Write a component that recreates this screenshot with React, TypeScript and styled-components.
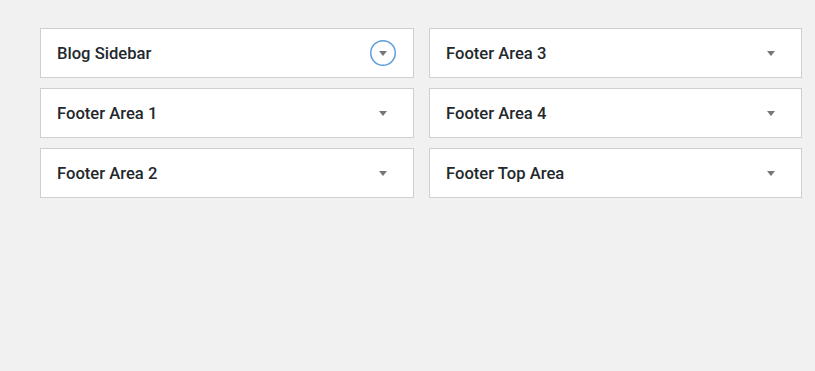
import styled, { createGlobalStyle } from 'styled-components'

const GlobalStyle = createGlobalStyle`
	html, body {
		margin: 0;
		padding: 0;
		background: #f1f1f1;
		font-family: Roboto, "Liberation Sans", sans-serif;
	}
`

const Page = styled.div`
	width: 815px;
	height: 371px;
	padding: 28px 0 0 40px;
	box-sizing: border-box;
`

const Grid = styled.div`
	display: grid;
	grid-template-columns: 374px 373px;
	column-gap: 15px;
	row-gap: 10px;
`

const Card = styled.div`
	height: 50px;
	box-sizing: border-box;
	background: #fff;
	border: 1px solid #ccd0d4;
	display: flex;
	align-items: center;
	justify-content: space-between;
	padding: 0 17px 0 16px;
`

const Title = styled.h2`
	margin: 0;
	font-size: 16.6px;
	font-weight: 500;
	color: #23282d;
	letter-spacing: 0;
`

const Toggle = styled.button<{ $focused?: boolean }>`
	width: 26px;
	height: 26px;
	padding: 0;
	margin: 0;
	border-radius: 50%;
	background: transparent;
	border: 0;
	box-shadow: ${p => (p.$focused ? 'inset 0 0 0 1.5px #5b9dd9' : 'none')};
	display: flex;
	align-items: center;
	justify-content: center;
	cursor: pointer;

	&::after {
		content: '';
		width: 0;
		height: 0;
		margin-top: 1px;
		border-left: 4px solid transparent;
		border-right: 4px solid transparent;
		border-top: 5px solid #72777c;
	}
`

const areas = [
	{ name: 'Blog Sidebar', focused: true },
	{ name: 'Footer Area 3' },
	{ name: 'Footer Area 1' },
	{ name: 'Footer Area 4' },
	{ name: 'Footer Area 2' },
	{ name: 'Footer Top Area' },
]

const App = () => {
	return (
		<>
			<GlobalStyle />
			<Page>
				<Grid>
					{areas.map(a => (
						<Card key={a.name}>
							<Title>{a.name}</Title>
							<Toggle $focused={a.focused} aria-label='Toggle' />
						</Card>
					))}
				</Grid>
			</Page>
		</>
	)
}

export default App
